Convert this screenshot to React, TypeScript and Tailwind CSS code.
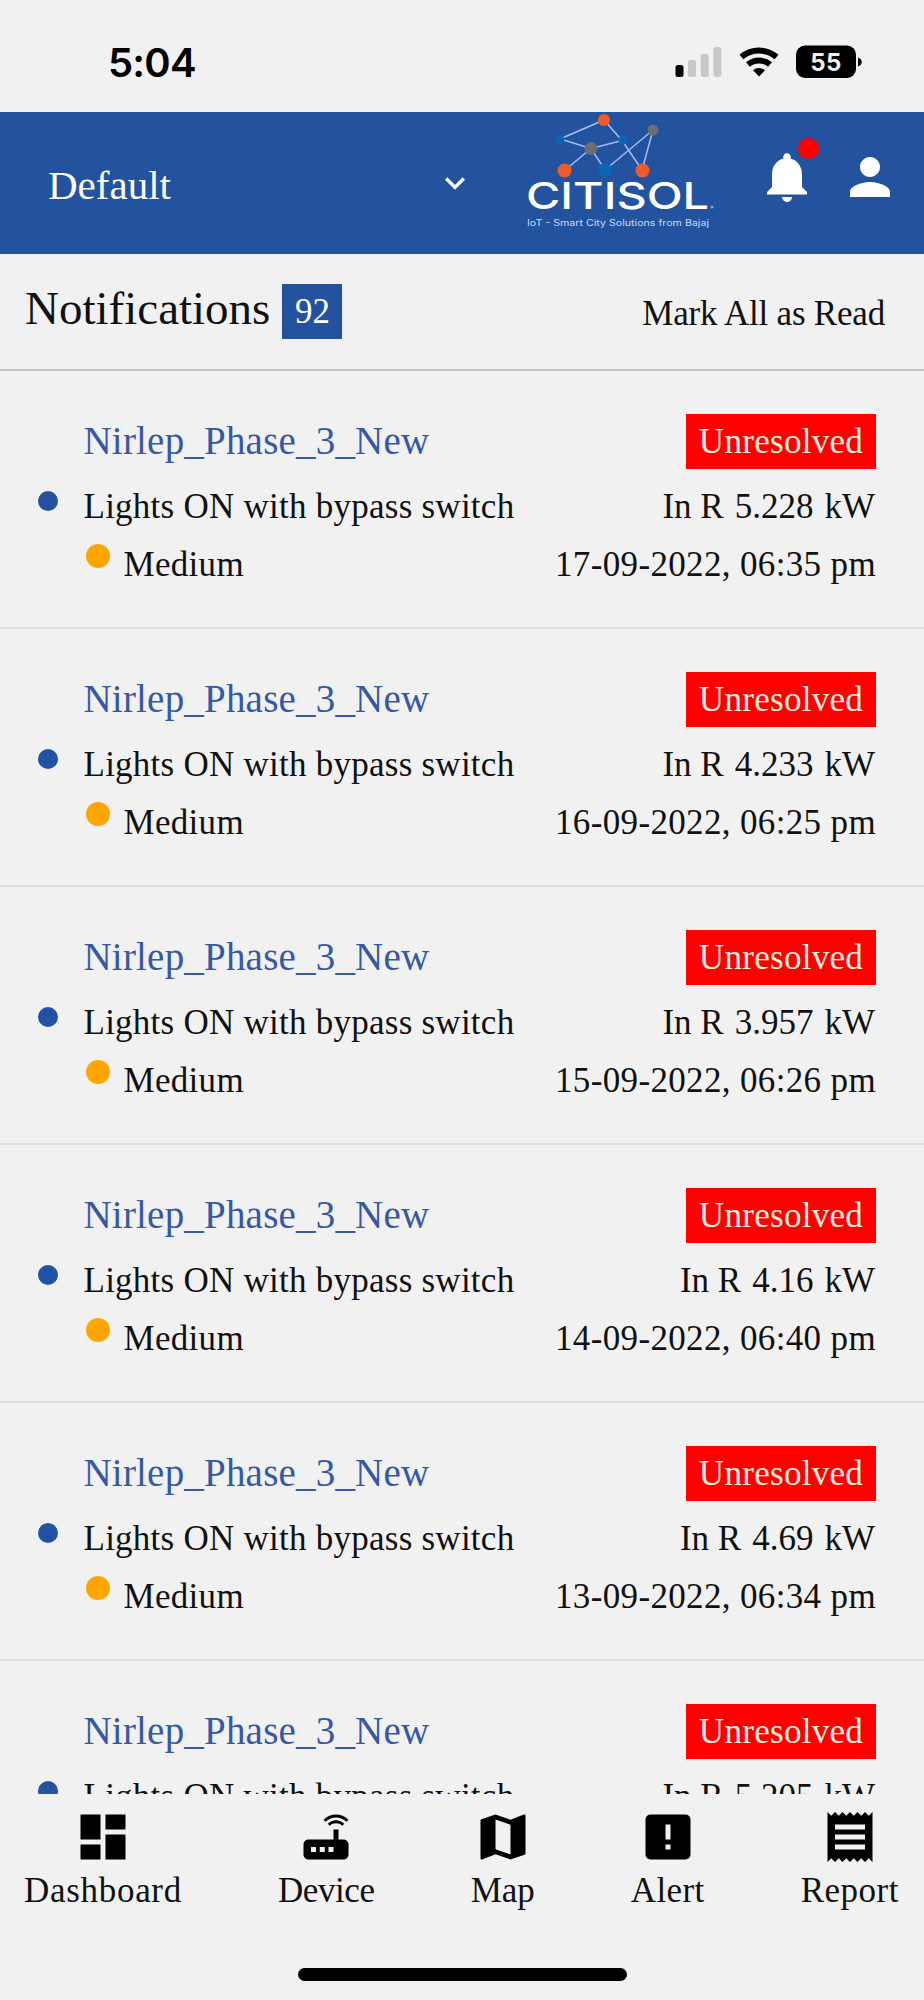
import {
  MdDashboard,
  MdKeyboardArrowDown,
  MdMap,
  MdNotifications,
  MdPerson,
  MdReceipt,
  MdRouter,
} from 'react-icons/md';

interface Notification {
  id: number;
  device: string;
  message: string;
  severity: string;
  value: string;
  date: string;
}

const notifications: Notification[] = [
  { id: 1, device: 'Nirlep_Phase_3_New', message: 'Lights ON with bypass switch', severity: 'Medium', value: '5.228', date: '17-09-2022, 06:35 pm' },
  { id: 2, device: 'Nirlep_Phase_3_New', message: 'Lights ON with bypass switch', severity: 'Medium', value: '4.233', date: '16-09-2022, 06:25 pm' },
  { id: 3, device: 'Nirlep_Phase_3_New', message: 'Lights ON with bypass switch', severity: 'Medium', value: '3.957', date: '15-09-2022, 06:26 pm' },
  { id: 4, device: 'Nirlep_Phase_3_New', message: 'Lights ON with bypass switch', severity: 'Medium', value: '4.16', date: '14-09-2022, 06:40 pm' },
  { id: 5, device: 'Nirlep_Phase_3_New', message: 'Lights ON with bypass switch', severity: 'Medium', value: '4.69', date: '13-09-2022, 06:34 pm' },
  { id: 6, device: 'Nirlep_Phase_3_New', message: 'Lights ON with bypass switch', severity: 'Medium', value: '5.205', date: '12-09-2022, 06:31 pm' },
];

function StatusBar() {
  return (
    <div className="flex h-[112px] shrink-0 items-start justify-between pr-[62px] pl-[108px] font-['Inter',sans-serif] text-black">
      <span className="mt-[39px] text-[40px] leading-[48px] font-semibold tracking-[-0.8px]">5:04</span>
      <svg width="188" height="36" viewBox="0 0 188 36" className="mt-[44px]">
        <rect x="1.5" y="21" width="8" height="12" rx="2.5" fill="#000" />
        <rect x="14" y="16" width="8" height="17" rx="2.5" fill="#c8c8c8" />
        <rect x="26.800" y="10" width="8" height="23" rx="2.5" fill="#c8c8c8" />
        <rect x="39.400" y="3" width="8" height="30" rx="2.5" fill="#c8c8c8" />
        <g fill="none" stroke="#000" strokeWidth="6">
          <path d="M67.500 13a27 27 0 0 1 35 0" />
          <path d="M74 20.500a17 17 0 0 1 22 0" />
        </g>
        <path d="M85 32.500 79 26.300a9 9 0 0 1 12 0z" fill="#000" />
        <rect x="122" y="1.500" width="60" height="32.500" rx="9" fill="#000" />
        <path d="M184 13.500c5 1.500 5 7.500 0 9z" fill="#000" />
        <text x="152" y="26.500" textAnchor="middle" fontSize="24" fontWeight="700" letterSpacing="0.5" fill="#f1f1f1">55</text>
      </svg>
    </div>
  );
}

function Logo() {
  return (
    <svg width="192" height="120" viewBox="0 0 192 120" className="mt-px">
      <g stroke="#a9bdf5" strokeWidth="1.500" fill="none">
        <path d="M81 7 37 26 68 35.500 99 27.500z" />
        <path d="M68 35.500 42 57" />
        <path d="M68 35.500 82 57 130 17 119 57 99 27.500" />
      </g>
      <g fill="#f15a29">
        <circle cx="81" cy="7" r="6" />
        <circle cx="41.500" cy="57.500" r="7" />
        <circle cx="119.500" cy="57.500" r="7" />
      </g>
      <g fill="#6d6e71">
        <circle cx="68" cy="35.500" r="6.500" />
        <circle cx="130" cy="17" r="5.500" />
      </g>
      <g fill="#0b66b5">
        <circle cx="37" cy="26.500" r="4.500" />
        <circle cx="100" cy="27" r="4.500" />
        <circle cx="82" cy="57" r="7" />
      </g>
      <text x="3" y="96" textLength="183" lengthAdjust="spacingAndGlyphs" fontFamily="Inter, sans-serif" fontSize="37" fontWeight="500" fill="#fff">
        CITISOL
      </text>
      <circle cx="189" cy="94" r="1.500" fill="#7fa0dd" />
      <text x="4" y="112.500" textLength="182" lengthAdjust="spacingAndGlyphs" fontFamily="Inter, sans-serif" fontSize="9" fill="#c9d8f5">
        IoT - Smart City Solutions from Bajaj
      </text>
    </svg>
  );
}

function Header() {
  return (
    <header className="flex h-[142px] shrink-0 items-start bg-[#23539f] text-white">
      <div className="flex w-[426px] items-center pt-[45px] pl-[48px] text-[41px] leading-[56px]">
        Default
      </div>
      <MdKeyboardArrowDown className="mt-[51px] mr-[48px] ml-[9px] size-[40px] shrink-0" />
      <Logo />
      <div className="relative mt-[35px] ml-[42px]">
        <MdNotifications className="size-[60px]" />
        <span className="absolute top-[-9px] right-[-2px] size-[21px] rounded-full bg-[#ff0000]" />
      </div>
      <MdPerson className="mt-[35px] ml-[23px] size-[60px]" />
    </header>
  );
}

function NotificationRow({ item }: { item: Notification }) {
  return (
    <li className="flex h-[258px] shrink-0 items-start border-b-2 border-[#dedede] pr-[48px] pl-[38px]">
      <span className="mt-[120px] mr-[25.500px] size-5 shrink-0 rounded-full bg-[#2351a3]" />
      <div className="flex-1 pt-[43px]">
        <h2 className="mb-[9px] text-[39px] leading-[54px] tracking-[0.2px] text-[#3658a5]">{item.device}</h2>
        <p className="pt-px leading-[58px] tracking-[0.25px]">{item.message}</p>
        <p className="flex items-start leading-[58px]">
          <span className="mt-[8px] mr-[14px] ml-[2px] size-6 rounded-full bg-[#ffa500]" />
          <span className="tracking-[0.3px]">{item.severity}</span>
        </p>
      </div>
      <div className="flex flex-col items-end pt-[43px]">
        <span className="mb-[9px] w-[190px] bg-[#ff0000] text-center leading-[55px] tracking-[0.3px] text-[#ffefe0]">
          Unresolved
        </span>
        <p className="mr-px flex gap-[11px] leading-[58px]">
          <span>In R</span>
          <span>{item.value}</span>
          <span>kW</span>
        </p>
        <p className="leading-[58px] tracking-[0.35px]">{item.date}</p>
      </div>
    </li>
  );
}

function BottomNav() {
  return (
    <nav className="flex h-[206px] shrink-0 flex-col items-center">
      <div className="flex w-full justify-between pt-[13px] pr-[25px] pl-[24px] leading-[48px]">
        <a className="flex flex-col items-center tracking-[0.7px]">
          <MdDashboard className="size-[60px] text-black" />
          Dashboard
        </a>
        <a className="flex flex-col items-center tracking-[-0.4px]">
          <MdRouter className="size-[60px] text-black" />
          Device
        </a>
        <a className="flex flex-col items-center">
          <MdMap className="size-[60px] text-black" />
          Map
        </a>
        <a className="flex flex-col items-center tracking-[0.4px]">
          <svg viewBox="0 0 24 24" className="size-[60px] text-black">
            <path
              fill="currentColor"
              fillRule="evenodd"
              d="M5 3h14a2 2 0 0 1 2 2v14a2 2 0 0 1-2 2H5a2 2 0 0 1-2-2V5a2 2 0 0 1 2-2zm6 4v6h2V7zm0 8v2h2v-2z"
            />
          </svg>
          Alert
        </a>
        <a className="flex flex-col items-center tracking-[0.5px]">
          <MdReceipt className="size-[60px] text-black" />
          Report
        </a>
      </div>
      <div className="mt-[53px] h-[13px] w-[329px] rounded-full bg-black" />
    </nav>
  );
}

export default function App() {
  return (
    <div className="flex h-[2000px] w-[924px] flex-col overflow-hidden bg-[#f1f1f1] font-['Liberation_Serif',serif] text-[35px] text-[#111]">
      <StatusBar />
      <Header />
      <div className="flex h-[117px] shrink-0 items-start border-b-2 border-[#c4c4c4] pr-[39px] pl-[25px]">
        <h1 className="mt-[26px] text-[47px] leading-[56px]">Notifications</h1>
        <span className="mt-[30px] ml-[12px] w-[60px] bg-[#23539f] text-center leading-[55px] text-white">92</span>
        <button className="mt-[32px] ml-auto leading-[56px] tracking-[-0.2px]">Mark All as Read</button>
      </div>
      <ul className="flex min-h-0 flex-1 flex-col overflow-hidden">
        {notifications.map((item) => (
          <NotificationRow key={item.id} item={item} />
        ))}
      </ul>
      <BottomNav />
    </div>
  );
}
